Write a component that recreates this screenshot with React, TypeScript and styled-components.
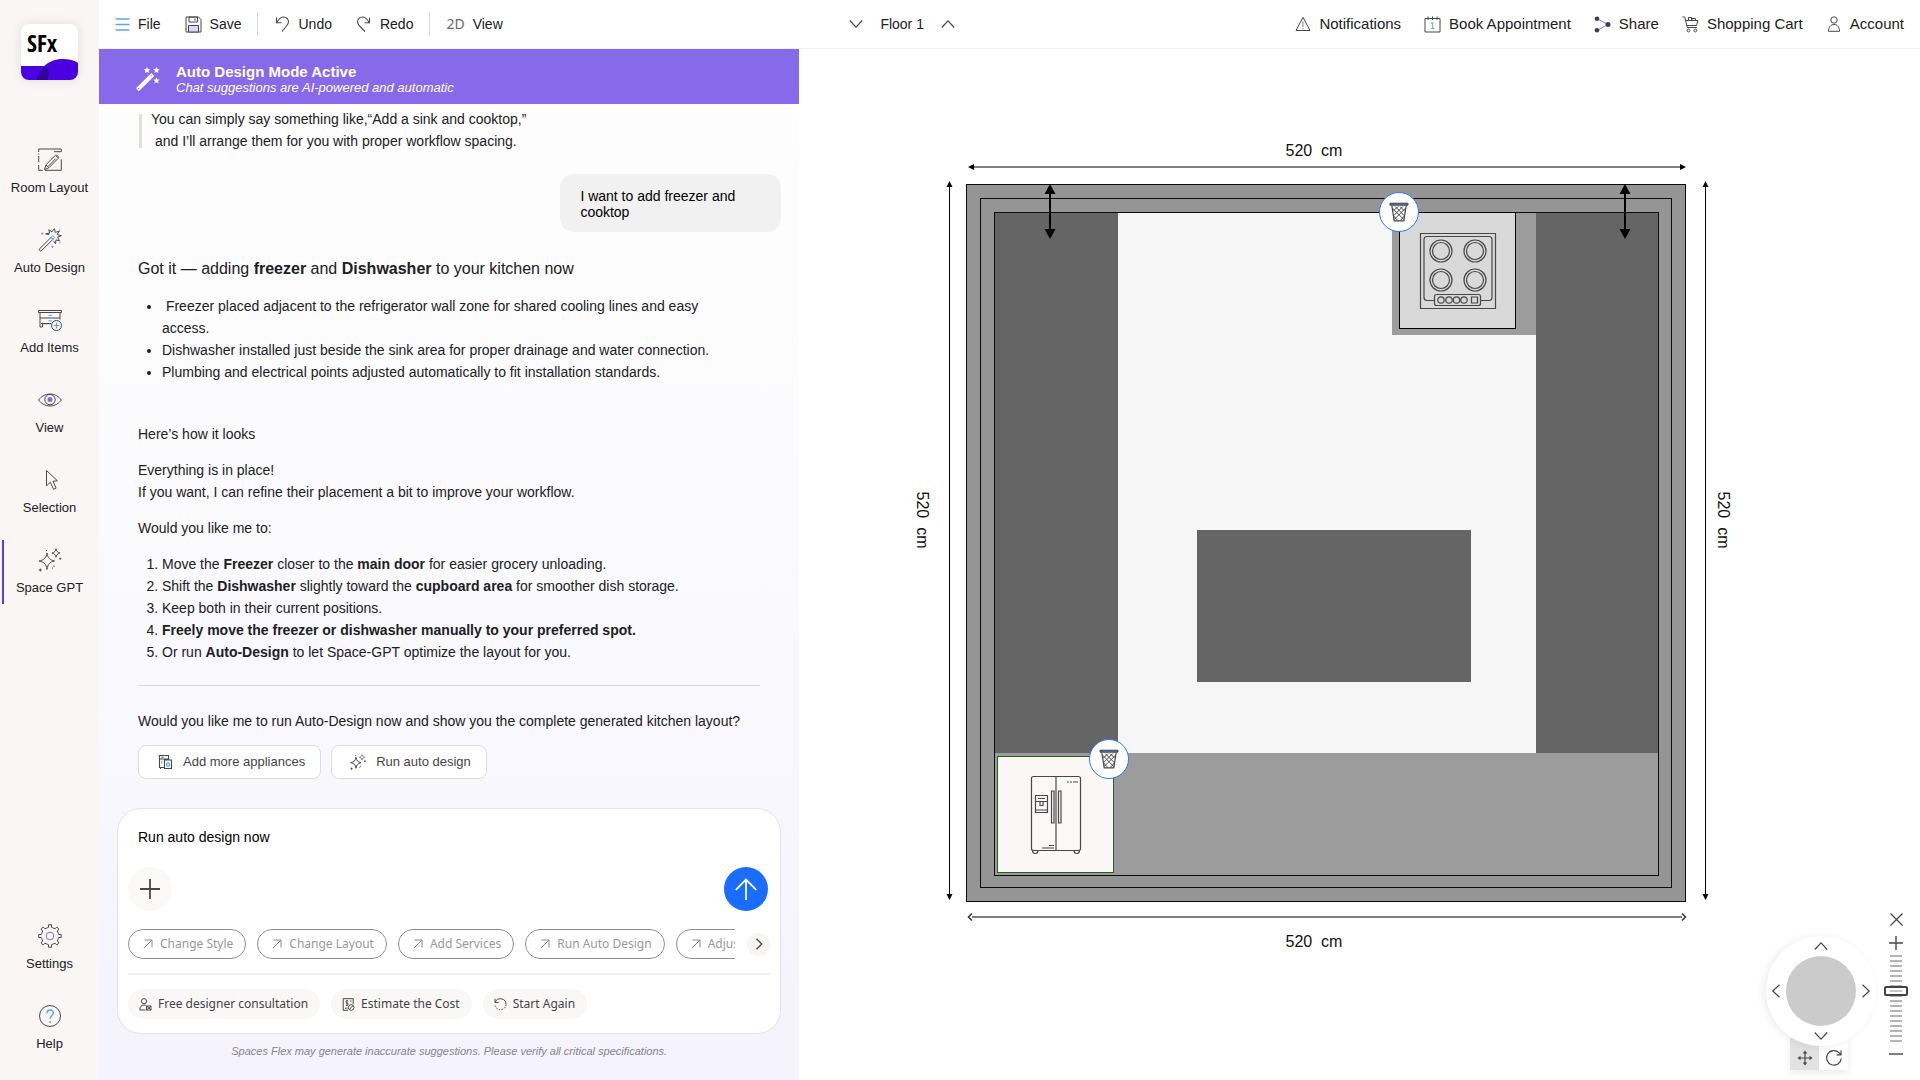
import React from "react";
import styled, { createGlobalStyle, css } from "styled-components";

const ink = "#202022";
const line = "#48484a";
const blue = "#5aa9f0";
const violet = "#8466ea";
const sans = '"Liberation Sans", Arial, sans-serif';
const noto = '"Noto Sans", sans-serif';

const GlobalStyle = createGlobalStyle`
  *, *::before, *::after { box-sizing: border-box; }
  body { margin: 0; background: #fff; color: ${ink}; font: 14px/22px ${sans}; }
  button, textarea, input { font: inherit; color: inherit; margin: 0; }
  button { background: none; border: 0; padding: 0; cursor: pointer; }
  p, ul, ol, h1 { margin: 0; }
  svg { display: block; flex: none; }
`;

/* ---------- shell ---------- */

const Shell = styled.div`
  display: grid;
  grid-template-columns: 99px minmax(0, 1fr);
  height: 100vh;
  min-height: 1080px;
`;

const Sidebar = styled.nav`
  display: flex;
  flex-direction: column;
  align-items: stretch;
  background: #faf6f5;
  padding: 24px 0 20px;
`;

const Logo = styled.a`
  align-self: center;
  display: block;
  width: 57px;
  height: 56px;
  margin-bottom: 60px;
  border-radius: 8px;
  overflow: hidden;
  background: #fff;
  box-shadow: 0 0 12px rgba(0, 0, 0, 0.1);
`;

const NavGroup = styled.div`
  display: flex;
  flex-direction: column;
  gap: 16px;
  &:last-child {
    margin-top: auto;
  }
`;

const NavItem = styled.button<{ $active?: boolean }>`
  display: flex;
  flex-direction: column;
  align-items: center;
  gap: 6px;
  height: 64px;
  margin-left: 2px;
  padding: 8px 4px 0 0;
  border-left: 2px solid ${(p) => (p.$active ? "#5b3fd6" : "transparent")};
  font-size: 13px;
  line-height: 20px;
`;

const Main = styled.div`
  display: grid;
  grid-template-columns: minmax(0, 5fr) minmax(0, 8fr);
  grid-template-rows: 49px minmax(0, 1fr);
`;

/* ---------- top bar ---------- */

const TopBar = styled.header`
  grid-column: 1 / -1;
  display: grid;
  grid-template-columns: subgrid;
  align-items: center;
  border-bottom: 1px solid #efeff1;
  background: #fff;
`;

const TopLeft = styled.div`
  display: flex;
  align-items: center;
  padding-left: 16px;
  gap: 16px;
`;

const TopRight = styled.div`
  display: flex;
  align-items: center;
  justify-content: space-between;
  padding: 0 16px 0 50px;
`;

const TopGroup = styled.div<{ $gap: number }>`
  display: flex;
  align-items: center;
  gap: ${(p) => p.$gap}px;
`;

const TopButton = styled.button<{ $large?: boolean }>`
  display: flex;
  align-items: center;
  gap: 8px;
  font-size: ${(p) => (p.$large ? 15 : 14)}px;
  line-height: 24px;
  white-space: nowrap;
`;

const TwoD = styled.span`
  font-family: ${noto};
  color: #6a6a6c;
`;

const Divider = styled.span`
  width: 1px;
  height: 24px;
  background: #d9d9dc;
`;

/* ---------- chat ---------- */

const Panel = styled.section`
  display: flex;
  flex-direction: column;
  min-height: 0;
  background: linear-gradient(#fefefe 0%, #fbfbfd 45%, #f4f3fe 100%);
`;

const Banner = styled.div`
  display: flex;
  align-items: center;
  gap: 16px;
  padding: 14px 37px 9px;
  background: #8769ea;
  color: #fff;
`;

const BannerTitle = styled.h1`
  font-size: 15px;
  line-height: 18px;
  font-weight: 700;
`;

const BannerNote = styled.p`
  font-size: 13px;
  line-height: 14px;
  font-style: italic;
`;

const Chat = styled.div`
  flex: 1;
  min-height: 0;
  overflow: hidden;
  display: flex;
  flex-direction: column;
  padding: 4px 18px 0 39px;
`;

const Quote = styled.blockquote`
  position: relative;
  margin: 0;
  padding-left: 13px;
  white-space: pre-line;
  &::before {
    content: "";
    position: absolute;
    left: 1px;
    top: 6px;
    bottom: 4px;
    width: 3px;
    background: #e4e0dc;
  }
`;

const Bubble = styled.p`
  align-self: flex-end;
  width: 221px;
  margin-top: 22px;
  padding: 14px 20px 12px;
  border-radius: 14px;
  background: #f1f1f1;
  color: #000;
  line-height: 16px;
`;

const Lead = styled.p`
  margin-top: 26px;
  font-size: 16px;
`;

const Para = styled.p<{ $top: number }>`
  margin-top: ${(p) => p.$top}px;
`;

const listStyle = css`
  padding-left: 24px;
  padding-right: 48px;
`;

const Bullets = styled.ul`
  ${listStyle}
  margin-top: 15px;
`;

const Steps = styled.ol`
  ${listStyle}
  margin-top: 14px;
`;

const Rule = styled.hr`
  width: auto;
  height: 1px;
  margin: 22px 21px 0 0;
  border: 0;
  background: #dcdade;
`;

const ReplyRow = styled.div`
  display: flex;
  gap: 10px;
  margin-top: 13px;
`;

const Reply = styled.button`
  display: flex;
  align-items: center;
  gap: 10px;
  height: 34px;
  padding: 0 15px 0 18px;
  border: 1px solid #dddbe0;
  border-radius: 8px;
  background: #fff;
  font-size: 13px;
  color: #454547;
`;

/* ---------- composer ---------- */

const Composer = styled.form`
  display: flex;
  flex-direction: column;
  margin: 0 18px;
  padding: 17px 10px 14px;
  border: 1px solid #e4e3ea;
  border-radius: 24px;
  background: #fff;
`;

const Message = styled.textarea`
  display: block;
  height: 22px;
  padding: 0 10px;
  border: 0;
  outline: 0;
  resize: none;
  overflow: hidden;
  background: none;
  color: #000;
`;

const ActionRow = styled.div`
  display: flex;
  justify-content: space-between;
  margin-top: 19px;
  padding-right: 2px;
`;

const RoundButton = styled.button<{ $size: number; $fill: string }>`
  display: grid;
  place-items: center;
  flex: none;
  width: ${(p) => p.$size}px;
  height: ${(p) => p.$size}px;
  border-radius: 50%;
  background: ${(p) => p.$fill};
`;

const ChipRow = styled.div`
  display: flex;
  align-items: center;
  gap: 12px;
  margin-top: 18px;
`;

const ChipTrack = styled.div`
  display: flex;
  flex: 1;
  min-width: 0;
  gap: 11px;
  overflow: hidden;
`;

const Chip = styled.button`
  display: flex;
  flex: none;
  align-items: center;
  gap: 7px;
  height: 30px;
  padding: 0 12px 0 14px;
  border: 1px solid #8f8f92;
  border-radius: 15px;
  font: 12px/20px ${noto};
  color: #98989b;
  white-space: nowrap;
`;

const Split = styled.hr`
  width: 100%;
  height: 2px;
  margin: 14px 0;
  border: 0;
  background: #f0f0f1;
`;

const PillRow = styled.div`
  display: flex;
  gap: 11px;
`;

const Pill = styled.button`
  display: flex;
  align-items: center;
  gap: 6px;
  height: 30px;
  padding: 0 12px 0 11px;
  border-radius: 15px;
  background: #faf8f7;
  font: 12px/20px ${noto};
  color: #434345;
  white-space: nowrap;
`;

const Disclaimer = styled.p`
  padding: 7px 0 19px;
  text-align: center;
  font-size: 11px;
  line-height: 20px;
  font-style: italic;
  color: #85848c;
`;

/* ---------- canvas ---------- */

const Canvas = styled.main`
  position: relative;
  display: flex;
  justify-content: center;
  align-items: flex-start;
  padding: 89px 72px 0 0;
  background: #fff;
`;

const Plan = styled.div`
  position: relative;
  width: 820px;
`;

const DeleteButton = styled.button<{ $x: number; $y: number }>`
  position: absolute;
  left: ${(p) => p.$x}px;
  top: ${(p) => p.$y}px;
  display: grid;
  place-items: center;
  width: 40px;
  height: 40px;
  border: 1px solid #2f78e6;
  border-radius: 50%;
  background: #fff;
`;

const ViewControls = styled.aside`
  position: absolute;
  right: 12px;
  bottom: 10px;
  display: flex;
  align-items: flex-end;
  gap: 8px;
`;

const PadColumn = styled.div`
  display: flex;
  flex-direction: column;
`;

const Pad = styled.div`
  display: grid;
  grid-template-columns: 20px 70px 20px;
  grid-template-rows: 20px 70px 20px;
  place-items: center;
  width: 110px;
  height: 110px;
  border-radius: 50%;
  background: #fff;
  box-shadow: -3px 1px 8px rgba(0, 0, 0, 0.07);
  z-index: 1;
  & > button {
    display: grid;
    place-items: center;
    width: 20px;
    height: 20px;
  }
`;

const Knob = styled.span`
  grid-area: 2 / 2;
  width: 70px;
  height: 70px;
  border-radius: 50%;
  background: #cbcbcb;
`;

const PadButton = styled.button<{ $row: number; $col: number }>`
  grid-row: ${(p) => p.$row};
  grid-column: ${(p) => p.$col};
`;

const ModeRow = styled.div`
  display: flex;
  align-self: flex-start;
  margin: -8px 0 0 24px;
  box-shadow: 0 3px 8px rgba(0, 0, 0, 0.08);
`;

const ModeButton = styled.button<{ $on?: boolean }>`
  display: grid;
  place-items: center;
  width: 29px;
  height: 32px;
  padding-top: 8px;
  background: ${(p) => (p.$on ? "#e2e2e2" : "#fff")};
`;

const ZoomColumn = styled.div`
  display: flex;
  flex-direction: column;
  align-items: center;
  width: 24px;
  padding-bottom: 4px;
  & > button {
    display: grid;
    place-items: center;
    width: 24px;
    height: 24px;
  }
`;

const ZoomSlider = styled.input`
  appearance: none;
  writing-mode: vertical-lr;
  direction: rtl;
  width: 24px;
  height: 87px;
  background: repeating-linear-gradient(#b4b4b4 0 2px, transparent 2px 5px) center / 12px 100% no-repeat;
  &::-webkit-slider-thumb {
    appearance: none;
    width: 24px;
    height: 10px;
    border: 2px solid #444;
    border-radius: 2px;
    background: linear-gradient(#fff 0 2px, #c4c4c4 2px 4px, #fff 4px) center / 12px 6px no-repeat #fff;
  }
`;

/* ---------- icons ---------- */

type IconProps = { size?: number; children: React.ReactNode; box?: number; color?: string; w?: number };
const Icon = ({ size = 24, box = 24, color = line, w = 1, children }: IconProps) => (
  <svg width={size} height={size} viewBox={`0 0 ${box} ${box}`} fill="none" stroke={color} strokeWidth={w} aria-hidden="true">
    {children}
  </svg>
);

const RoomLayoutIcon = () => (
  <Icon>
    <path d="M.7 4V1h22.6v2.7H16M.7 8v6M.7 17v5.3h4M7 22.3h16.3v-11M18 8l2 1.5M.7 5.5v1" />
    <path d="M6.500 21.700l1.600-5 9-9.200c1.500-1.300 4.300 1.200 3 2.900l-9 9.200-4.600 2.100zM8 17l3 2.600M10.500 18l7-7.200" />
  </Icon>
);
const AutoDesignIcon = () => (
  <Icon>
    <path d="M1.200 21.200 13 9.400l1.900 1.900L3.100 23.100c-.6.6-2.500-1.300-1.900-1.900z" />
    <path d="M11 11.400 14.800 7.600l1.900 1.900-3.800 3.800" stroke={blue} />
    <path d="M11.300 6.700 7.600 5.800l4-.7-.8-3.400L14 3.800 16.400.7l.9 3.700 3.900-1.200-2.100 3.500 4.300 1-3.900 1.600 2 3.500-3.500-.9-.5 3.800-2-2.800" />
    <path d="M4.300 4.400v2.400M3.100 5.600h2.400M14.300 17.600V20M13.100 18.800h2.400M21.600 1.500v2M22 13.500v2" stroke="#c07be6" />
  </Icon>
);
const AddItemsIcon = () => (
  <Icon>
    <path d="M.5 2.500h23v2H.5zM2 4.500V19h2.500v-3.300h8M22 4.500v7M2 10h20M3 15.500h10" />
    <path d="M10.500 7.300h3.500M10.500 12.800h3.500" stroke={blue} />
    <circle cx="18.500" cy="17.500" r="5" fill="#faf6f5" />
    <path d="M18.500 14.500v6M15.500 17.500h6" stroke={blue} />
  </Icon>
);
const EyeIcon = () => (
  <Icon>
    <path d="M.6 12C3 8.600 7 6 12 6s9 2.600 11.400 6C21 15.400 17 18 12 18S3 15.400.6 12z" />
    <circle cx="12" cy="11.600" r="5.200" />
    <circle cx="12" cy="11.600" r="2.500" fill={violet} stroke="none" />
  </Icon>
);
const CursorIcon = () => (
  <Icon>
    <path d="M8.500 2.500v15.300l3.800-3.500 3.300 7 2.500-1.200-3.100-6.800 4.400-.5z" />
  </Icon>
);
const SparkIcon = ({ size = 24, accent = line }: { size?: number; accent?: string }) => (
  <Icon size={size} w={size < 20 ? 1.5 : 1}>
    <path d="M9 5c.8 5 2.800 7 7.500 8-4.700 1-6.700 3-7.500 8.500C8.200 16 6 14 1 13c5-1 7.200-3 8-8z" />
    <path d="M18 .8c.5 2.600 1.500 3.600 4 4.200-2.500.6-3.500 1.600-4 4.200-.5-2.600-1.500-3.600-4-4.200 2.500-.6 3.500-1.600 4-4.200z" stroke={accent} />
    <path d="M22.300 9.700v2M21.300 10.700h2M2.300 20.500v3M.8 22h3M16 17.500v1.500M14.500 19.500v1M8.500 2v1" />
  </Icon>
);
const GearIcon = () => {
  const pts: string[] = [];
  for (let i = 0; i < 8; i++) {
    const a = (i * Math.PI) / 4;
    [[-0.34, 8.6], [-0.17, 8.8], [-0.14, 11.3], [0.14, 11.3], [0.17, 8.8], [0.34, 8.6]].forEach(([d, r]) =>
      pts.push(`${(12 + r * Math.sin(a + d)).toFixed(2)},${(12 - r * Math.cos(a + d)).toFixed(2)}`)
    );
  }
  return (
    <Icon>
      <polygon points={pts.join(" ")} strokeLinejoin="round" />
      <circle cx="12" cy="12" r="3.800" stroke={violet} />
    </Icon>
  );
};
const HelpIcon = () => (
  <Icon>
    <circle cx="12" cy="12" r="10.500" />
    <path d="M9 9.200C9 5 15.300 5 15.300 9c0 2.600-3.200 2.800-3.200 5.700M12.100 17v2" stroke={blue} strokeWidth="1.500" />
  </Icon>
);

const MenuIcon = () => (
  <Icon size={15} box={15} color={blue} w={1.4}>
    <path d="M.5 2h14M.5 7.500h14M.5 13h14" />
  </Icon>
);
const SaveIcon = () => (
  <Icon size={17} box={17}>
    <path d="M1 1h12.500L16 3.500V16H1z" />
    <path d="M4 1h8.500v5H4zM10 2.500v2.200" />
    <path d="M3.500 9.500h10V16h-10z" fill="#ddd6fa" />
  </Icon>
);
const UndoIcon = () => (
  <Icon size={16} box={16} w={1.1}>
    <path d="M2.500 1.500v5.300h5M3 6.300C4.500 3.500 6.500 1 9.500 1c3.300 0 5 2.500 5 4.800 0 1.700-.8 2.900-2 4.200L8 15.500" />
  </Icon>
);
const RedoIcon = () => (
  <Icon size={16} box={16} w={1.1}>
    <path d="M13.500 1.500v5.300h-5M13 6.300C11.500 3.500 9.500 1 6.500 1c-3.300 0-5 2.500-5 4.800 0 1.700.8 2.900 2 4.200L9 15.500" />
  </Icon>
);
const BellIcon = () => (
  <Icon size={16} box={16}>
    <path d="M8 1.300 15 14.500H1z" />
    <path d="M8 5.500V11M8 12v1.200" stroke={violet} />
  </Icon>
);
const CalendarIcon = () => (
  <Icon size={17} box={17}>
    <path d="M1 2.500h15V16H1zM4 .5v3.500M8.500.5v3.500M13 .5v3.500" />
    <path d="M7 7.500 8.700 6.500v6M7 12.500h3.500" stroke={blue} />
  </Icon>
);
const ShareIcon = () => (
  <Icon size={17} box={17}>
    <path d="M3 2.500 14 8.500 3 14.500" stroke="#7d86e8" />
    <g fill="#3d3d55" stroke="none">
      <circle cx="3" cy="2.800" r="2.300" />
      <circle cx="14" cy="8.500" r="2.500" />
      <circle cx="3" cy="14.200" r="2.300" />
    </g>
  </Icon>
);
const CartIcon = () => (
  <Icon size={17} box={17}>
    <path d="M.5 1h2.300l2.500 10.500h9.500M3.500 4.500H16l-1.500 5H4.800M6.500 4V1.500h3V4M10 4V2.500h3.500V4" />
    <circle cx="6.500" cy="14.500" r="1.400" />
    <circle cx="13.300" cy="14.500" r="1.400" />
  </Icon>
);
const UserIcon = () => (
  <Icon size={16} box={16}>
    <circle cx="8" cy="4" r="3.200" />
    <path d="M2.500 15.300c0-4 2-6.800 5.500-6.800s5.500 2.800 5.500 6.800z" />
  </Icon>
);

const turns = { up: 0, right: 90, down: 180, left: 270 };
const Chevron = ({ dir, size = 14 }: { dir: keyof typeof turns; size?: number }) => (
  <Icon size={size} box={14} w={1.2}>
    <path d="M.8 10.500 7 3.800l6.200 6.700" transform={`rotate(${turns[dir]} 7 7)`} />
  </Icon>
);

const BannerWand = () => (
  <Icon color="#fff" w={1.5}>
    <path d="M1 21.300 15.300 7l1.900 1.900L2.900 23.200zM3 21.300 15 9.200" />
    {[[11, 3.200], [20.500, 3.200], [20.500, 13.500]].map(([x, y]) => (
      <path
        key={`${x}-${y}`}
        d="M0-3.300.9-1.100 3.200-.9 1.500.6 2 2.900 0 1.700-2 2.900-1.500.6-3.200-.9-.9-1.100z"
        transform={`translate(${x} ${y})`}
        fill="#fff"
        stroke="none"
      />
    ))}
  </Icon>
);
const ApplianceIcon = () => (
  <Icon size={16} box={16} w={1.1}>
    <path d="M7 13.500H2.500V1.500h9v4M2.500 5h9M4.500 3.200h2M3.500 13.500v1.500M7.500 6h7v8.500h-7z" />
    <circle cx="11" cy="10.500" r="1.800" stroke={blue} fill="#bfe0fb" />
    <path d="M4.800 6.500v3" stroke={blue} />
  </Icon>
);
const DiagonalArrow = () => (
  <Icon size={10} box={10} color="#8b8b8e">
    <path d="M.8 9.200 9 1M1.500 1H9v7.500" />
  </Icon>
);
const DesignerIcon = () => (
  <Icon size={13} box={13}>
    <circle cx="5" cy="3.200" r="2.600" />
    <path d="M6.500 12H.8c0-3.200 1.500-5 4.200-5 1 0 1.800.3 2.400.8" />
    <path d="M7.500 8h4.500v4H7.500zM7.500 12 12 8M8 8.500l4 3.500" />
  </Icon>
);
const CostIcon = () => (
  <Icon size={13} box={13}>
    <path d="M6 12.300H1.200V.7h10v5.500M5.500 2.500C3.500 2.500 3.500 5 5 5s1.500 2.500-.5 2.500M5 2v6M3 10.200h2.500M8 3h1.500" />
    <circle cx="9.200" cy="9.500" r="2.800" />
    <path d="m7.500 11.200 3.500-3.500" />
  </Icon>
);
const RestartIcon = () => (
  <Icon size={13} box={13}>
    <path d="M1 .8v3.700h3.700M1.200 4.300A5.600 5.600 0 0 1 12 6.500" />
    <path d="M12 6.500A5.600 5.600 0 0 1 1 7.500" strokeDasharray="1.500 1.300" />
  </Icon>
);
const TrashIcon = () => (
  <Icon size={20} box={20}>
    <path d="M2.800 3.500 5.200 18.800h9.600L17.200 3.500" strokeWidth="1.200" />
    <path d="M3.300 6 14.800 17.500M6.200 4.500l9.500 9.500M11 4.500l5 5M16.700 6 5.200 17.500M13.800 4.500 4.300 14M9 4.500l-5 5M4.700 14l4 4.500M15.300 14l-4 4.500" />
    <path d="M1 1.200h18v2H1z" fill="#3f73b5" />
  </Icon>
);
const MoveIcon = () => (
  <Icon size={16} box={16} w={1.2}>
    <path d="M8 2v12M2 8h12" />
    <path d="M8 .5 10.300 3.500H5.700zM8 15.500l2.300-3H5.700zM.5 8l3-2.300v4.600zM15.500 8l-3-2.300v4.600z" fill={line} stroke="none" />
  </Icon>
);
const RotateIcon = () => (
  <Icon size={18} box={18} w={1.2}>
    <path d="M16.200 9.500a7.300 7.300 0 1 1-2-5.700l1.800 2M16 1.500v4.300h-4.500" />
  </Icon>
);

const LogoArt = () => (
  <svg width="57" height="56" viewBox="0 0 57 56" role="img" aria-label="SFx">
    <path d="M0 42h30v14H0z" fill="#4a00e0" />
    <path d="M16 56C18 42 30 35 42 35c6 0 11 1 15 4v17z" fill="#4a00e0" />
    <path d="M16 56c1-6 4-11 9-14 3 3 3.500 9 1.500 14z" fill="#3300a0" />
    <text x="6" y="28" fontFamily="Open Sans Condensed, Roboto Condensed, Lato, sans-serif" fontWeight="900" fontSize="24" fill="#000">
      SFx
    </text>
  </svg>
);

/* ---------- floor plan drawing ---------- */

const Burner = ({ x, y }: { x: number; y: number }) => (
  <g>
    <circle cx={x} cy={y} r="11" />
    <circle cx={x} cy={y} r="8.500" />
  </g>
);

const DepthArrow = ({ x }: { x: number }) => (
  <g fill="#000">
    <path d={`M${x - 1} 54h2v40h-2z`} />
    <path d={`M${x} 46l5.500 10h-11zM${x} 101l5.500-10h-11z`} />
  </g>
);

const Cooktop = () => (
  <g fill="none" stroke="#48484a" strokeWidth="1.200">
    <path d="M506.500 95.500h75v75h-75z" />
    <path d="M520 162.500h-7a3 3 0 0 1-3-3v-58a3 3 0 0 1 3-3h62a3 3 0 0 1 3 3v58a3 3 0 0 1-3 3h-9" />
    <Burner x={527} y={113} />
    <Burner x={561} y={113} />
    <Burner x={527} y={142} />
    <Burner x={561} y={142} />
    <rect x="520.500" y="156.500" width="46" height="11" rx="2" />
    {[527, 535, 542.5, 550].map((x) => (
      <circle key={x} cx={x} cy="162" r="3.200" />
    ))}
    <path d="M557.500 159h6v6h-6z" />
  </g>
);

const Fridge = () => (
  <g fill="none" stroke="#48484a" strokeWidth="1.200">
    <rect x="117.500" y="638.500" width="49" height="74" rx="2" fill="#fbf8f8" />
    <path d="M142 639v73" />
    <path d="M137.500 653h2.500v32h-2.500zM144.500 653h2.500v32h-2.500zM121.500 657.500h12v17h-12zM121.500 663.500h12M126 663.500v4h3v-4M121.500 672h12M124 660.500h7" />
    <path d="M153 644h2M156 644h2M159 644h5M135 707.500h5M128 710h12" />
    <path d="M118.500 712.500c0 4 5.500 4 5.500 0M160 712.500c0 4 5.500 4 5.500 0" />
  </g>
);

const size = "520\u00a0\u00a0cm";

const FloorPlan = () => (
  <svg width="820" height="820" viewBox="0 0 820 820" role="img" aria-label="Kitchen floor plan, 520 cm by 520 cm">
    <g shapeRendering="crispEdges">
      <g fill="#959595" stroke="#0c0c0c">
        <path d="M52.500 46.500h719v717h-719z" />
        <path d="M66.500 60.500h691v689h-691z" />
        <path d="M80.500 74.500h664v663h-664z" fill="#9c9c9c" />
      </g>
      <path d="M204 75h418v540H204z" fill="#f6f6f6" />
      <path d="M81 75h123v540H81zM622 75h122v540H622zM283 392h274v152H283z" fill="#656565" />
      <path d="M478 75h144v122H478z" fill="#9c9c9c" />
      <path d="M485.500 74.500h116v116h-116z" fill="#d9d9d9" stroke="#000" />
      <path d="M83.500 618.500h116v116h-116z" fill="#fbf7f7" stroke="#1d661d" />
      <path d="M58 28h710v2H58zM58 778h710v2H58z" fill="#808080" />
      <path d="M35 48h1v710h-1zM791 48h1v710h-1z" fill="#000" />
    </g>
    <path d="M54 29l6-3v6zM772 29l-6-3v6zM35.500 43l3 6h-6zM35.500 762l3-6h-6zM791.500 43l3 6h-6zM791.500 762l3-6h-6z" fill="#000" />
    <path d="M58 775.500 54.500 779l3.500 3.500M768 775.500l3.500 3.500-3.500 3.500" fill="none" stroke="#333" strokeWidth="1.500" />
    <DepthArrow x={136} />
    <DepthArrow x={711} />
    <Cooktop />
    <Fridge />
    <g fontFamily="Liberation Sans, sans-serif" fontSize="16" fill="#111" textAnchor="middle">
      <text x="400" y="18">{size}</text>
      <text x="400" y="809">{size}</text>
      <text transform="translate(3 382) rotate(90)">{size}</text>
      <text transform="translate(804 382) rotate(90)">{size}</text>
    </g>
  </svg>
);

/* ---------- page ---------- */

const tools = [
  { label: "Room Layout", icon: <RoomLayoutIcon /> },
  { label: "Auto Design", icon: <AutoDesignIcon /> },
  { label: "Add Items", icon: <AddItemsIcon /> },
  { label: "View", icon: <EyeIcon /> },
  { label: "Selection", icon: <CursorIcon /> },
  { label: "Space GPT", icon: <SparkIcon />, active: true },
];

const account = [
  { label: "Notifications", icon: <BellIcon /> },
  { label: "Book Appointment", icon: <CalendarIcon /> },
  { label: "Share", icon: <ShareIcon /> },
  { label: "Shopping Cart", icon: <CartIcon /> },
  { label: "Account", icon: <UserIcon /> },
];

const chips = ["Change Style", "Change Layout", "Add Services", "Run Auto Design", "Adjust"];

export default function App() {
  return (
    <Shell>
      <GlobalStyle />
      <Sidebar aria-label="Tools">
        <Logo href="#">
          <LogoArt />
        </Logo>
        <NavGroup>
          {tools.map((t) => (
            <NavItem key={t.label} type="button" $active={t.active}>
              {t.icon}
              {t.label}
            </NavItem>
          ))}
        </NavGroup>
        <NavGroup>
          <NavItem type="button">
            <GearIcon />
            Settings
          </NavItem>
          <NavItem type="button">
            <HelpIcon />
            Help
          </NavItem>
        </NavGroup>
      </Sidebar>

      <Main>
        <TopBar>
          <TopLeft>
            <TopGroup $gap={24}>
              <TopButton type="button"><MenuIcon />File</TopButton>
              <TopButton type="button"><SaveIcon />Save</TopButton>
            </TopGroup>
            <Divider />
            <TopGroup $gap={24}>
              <TopButton type="button"><UndoIcon />Undo</TopButton>
              <TopButton type="button"><RedoIcon />Redo</TopButton>
            </TopGroup>
            <Divider />
            <TopButton type="button"><TwoD>2D</TwoD>View</TopButton>
          </TopLeft>
          <TopRight>
            <TopGroup $gap={17}>
              <TopButton type="button" aria-label="Floor below"><Chevron dir="down" /></TopButton>
              <span>Floor 1</span>
              <TopButton type="button" aria-label="Floor above"><Chevron dir="up" /></TopButton>
            </TopGroup>
            <TopGroup $gap={23}>
              {account.map((a) => (
                <TopButton key={a.label} type="button" $large>{a.icon}{a.label}</TopButton>
              ))}
            </TopGroup>
          </TopRight>
        </TopBar>

        <Panel>
          <Banner>
            <BannerWand />
            <div>
              <BannerTitle>Auto Design Mode Active</BannerTitle>
              <BannerNote>Chat suggestions are AI-powered and automatic</BannerNote>
            </div>
          </Banner>

          <Chat>
            <Quote>{"You can simply say something like,“Add a sink and cooktop,”\n\u00a0and I’ll arrange them for you with proper workflow spacing."}</Quote>
            <Bubble>I want to add freezer and cooktop</Bubble>
            <Lead>Got it — adding <b>freezer</b> and <b>Dishwasher</b> to your kitchen now</Lead>
            <Bullets>
              <li>{"\u00a0"}Freezer placed adjacent to the refrigerator wall zone for shared cooling lines and easy access.</li>
              <li>Dishwasher installed just beside the sink area for proper drainage and water connection.</li>
              <li>Plumbing and electrical points adjusted automatically to fit installation standards.</li>
            </Bullets>
            <Para $top={40}>Here’s how it looks</Para>
            <Para $top={14}>
              Everything is in place!
              <br />
              If you want, I can refine their placement a bit to improve your workflow.
            </Para>
            <Para $top={14}>Would you like me to:</Para>
            <Steps>
              <li>Move the <b>Freezer</b> closer to the <b>main door</b> for easier grocery unloading.</li>
              <li>Shift the <b>Dishwasher</b> slightly toward the <b>cupboard area</b> for smoother dish storage.</li>
              <li>Keep both in their current positions.</li>
              <li><b>Freely move the freezer or dishwasher manually to your preferred spot.</b></li>
              <li>Or run <b>Auto-Design</b> to let Space-GPT optimize the layout for you.</li>
            </Steps>
            <Rule />
            <Para $top={24}>Would you like me to run Auto-Design now and show you the complete generated kitchen layout?</Para>
            <ReplyRow>
              <Reply type="button"><ApplianceIcon />Add more appliances</Reply>
              <Reply type="button"><SparkIcon size={16} accent={violet} />Run auto design</Reply>
            </ReplyRow>
          </Chat>

          <Composer onSubmit={(e) => e.preventDefault()}>
            <Message aria-label="Message" rows={1} defaultValue="Run auto design now" />
            <ActionRow>
              <RoundButton type="button" aria-label="Attach" $size={44} $fill="#faf9f8">
                <Icon size={20} box={20} w={1.8}><path d="M10 0v20M0 10h20" /></Icon>
              </RoundButton>
              <RoundButton type="submit" aria-label="Send" $size={44} $fill="#1b6dff">
                <Icon size={22} box={22} color="#fff" w={1.8}><path d="M11 22V1.500M.8 11.800 11 1.500l10.200 10.300" /></Icon>
              </RoundButton>
            </ActionRow>
            <ChipRow>
              <ChipTrack>
                {chips.map((c) => (
                  <Chip key={c} type="button"><DiagonalArrow />{c}</Chip>
                ))}
              </ChipTrack>
              <RoundButton type="button" aria-label="More suggestions" $size={23} $fill="#f8f6f5">
                <Icon size={12} box={12} w={1.3}><path d="m3.500.8 5.200 5.200-5.200 5.200" /></Icon>
              </RoundButton>
            </ChipRow>
            <Split />
            <PillRow>
              <Pill type="button"><DesignerIcon />Free designer consultation</Pill>
              <Pill type="button"><CostIcon />Estimate the Cost</Pill>
              <Pill type="button"><RestartIcon />Start Again</Pill>
            </PillRow>
          </Composer>
          <Disclaimer>Spaces Flex may generate inaccurate suggestions. Please verify all critical specifications.</Disclaimer>
        </Panel>

        <Canvas>
          <Plan>
            <FloorPlan />
            <DeleteButton type="button" aria-label="Remove cooktop" $x={465} $y={54}><TrashIcon /></DeleteButton>
            <DeleteButton type="button" aria-label="Remove freezer" $x={175} $y={601}><TrashIcon /></DeleteButton>
          </Plan>
          <ViewControls>
            <PadColumn>
              <Pad>
                <PadButton type="button" aria-label="Pan up" $row={1} $col={2}><Chevron dir="up" /></PadButton>
                <PadButton type="button" aria-label="Pan left" $row={2} $col={1}><Chevron dir="left" /></PadButton>
                <Knob />
                <PadButton type="button" aria-label="Pan right" $row={2} $col={3}><Chevron dir="right" /></PadButton>
                <PadButton type="button" aria-label="Pan down" $row={3} $col={2}><Chevron dir="down" /></PadButton>
              </Pad>
              <ModeRow>
                <ModeButton type="button" aria-label="Move" $on><MoveIcon /></ModeButton>
                <ModeButton type="button" aria-label="Rotate"><RotateIcon /></ModeButton>
              </ModeRow>
            </PadColumn>
            <ZoomColumn>
              <button type="button" aria-label="Close controls"><Icon size={13} box={13} w={1.3}><path d="M.5.5l12 12M12.500.5l-12 12" /></Icon></button>
              <button type="button" aria-label="Zoom in"><Icon size={14} box={14} w={1.4}><path d="M7 0v14M0 7h14" /></Icon></button>
              <ZoomSlider type="range" min={0} max={100} defaultValue={60} aria-label="Zoom level" />
              <button type="button" aria-label="Zoom out"><Icon size={14} box={14} w={1.4}><path d="M0 7h14" /></Icon></button>
            </ZoomColumn>
          </ViewControls>
        </Canvas>
      </Main>
    </Shell>
  );
}
